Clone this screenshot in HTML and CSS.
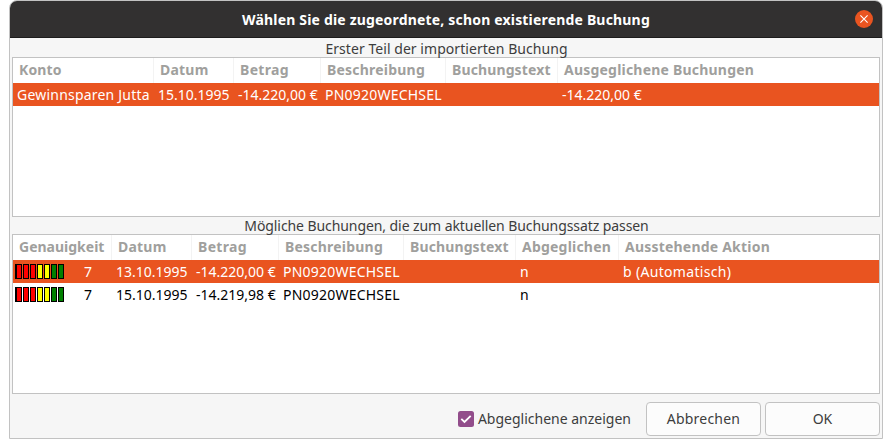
FILE: index.html
```html
<!DOCTYPE html>
<html lang="de">
<head>
<meta charset="utf-8">
<title>Wählen Sie die zugeordnete, schon existierende Buchung</title>
<link rel="stylesheet" href="styles.css">
</head>
<body>
<div class="dialog">
  <header class="titlebar">
    <h1>Wählen Sie die zugeordnete, schon existierende Buchung</h1>
    <button class="close" aria-label="Schließen">
      <svg width="18" height="18" viewBox="0 0 18 18"><circle cx="9" cy="9" r="9" fill="#e95420"/><path d="M5.4 5.4l7.2 7.2M12.6 5.4l-7.2 7.2" stroke="#fff" stroke-width="1.1"/></svg>
    </button>
  </header>
  <main>
    <h2 class="caption first">Erster Teil der importierten Buchung</h2>
    <div class="list">
      <div class="row head source">
        <span class="s1">Konto</span><span class="s2">Datum</span><span class="s3">Betrag</span><span class="s2">Beschreibung</span><span class="s1">Buchungstext</span><span class="s2">Ausgeglichene Buchungen</span>
      </div>
      <div class="row selected source">
        <span class="s2">Gewinnsparen Jutta</span><span>15.10.1995</span><span>-14.220,00 €</span><span class="s2">PN0920WECHSEL</span><span></span><span>-14.220,00 €</span>
      </div>
    </div>
    <h2 class="caption second">Mögliche Buchungen, die zum aktuellen Buchungssatz passen</h2>
    <div class="list">
      <div class="row head match">
        <span>Genauigkeit</span><span class="s2">Datum</span><span class="s3">Betrag</span><span class="s2">Beschreibung</span><span class="s1">Buchungstext</span><span class="s2">Abgeglichen</span><span class="s2">Ausstehende Aktion</span>
      </div>
      <div class="row selected match">
        <span class="score"><i class="meter"><b class="r"></b><b class="r"></b><b class="r"></b><b class="y"></b><b class="y"></b><b class="g"></b><b class="g"></b></i>7</span><span>13.10.1995</span><span>-14.220,00 €</span><span class="s2">PN0920WECHSEL</span><span></span><span>n</span><span class="s3">b (Automatisch)</span>
      </div>
      <div class="row match">
        <span class="score"><i class="meter"><b class="r"></b><b class="r"></b><b class="r"></b><b class="y"></b><b class="y"></b><b class="g"></b><b class="g"></b></i>7</span><span>15.10.1995</span><span>-14.219,98 €</span><span class="s2">PN0920WECHSEL</span><span></span><span>n</span><span></span>
      </div>
    </div>
    <footer>
      <label class="check">
        <svg width="16" height="16" viewBox="0 0 16 16"><rect width="16" height="16" rx="2.5" fill="#924d8b"/><path d="M3.3 7.8l3.2 3.2 6.2-6.2" fill="none" stroke="#fff" stroke-width="1.8"/></svg>
        <span>Abgeglichene anzeigen</span>
      </label>
      <button class="btn s2">Abbrechen</button>
      <button class="btn">OK</button>
    </footer>
  </main>
</div>
</body>
</html>
```
FILE: styles.css
```css
* { box-sizing: border-box; }

body {
  margin: 0;
  background: #fff;
  color: #3d3d3d;
  font: 14px/23px "Noto Sans", sans-serif;
}

.dialog {
  width: 874px;
  height: 439px;
  margin-left: 9px;
  border: 1px solid #c2c2c2;
  border-radius: 8px 8px 0 0;
  background: #f6f6f6;
  overflow: hidden;
}

.titlebar {
  display: grid;
  grid-template-columns: 27px 1fr 27px;
  height: 37px;
  border-bottom: 1px solid #1d1c1c;
  background: #323030;
}

.titlebar h1 {
  grid-column: 2;
  margin: 7px 0 0;
  color: #fff;
  font-size: 14px;
  line-height: 23px;
  font-weight: 700;
  letter-spacing: 0.18px;
  text-align: center;
}

.close {
  width: 18px;
  height: 18px;
  margin-top: 9px;
  padding: 0;
  border: 0;
  background: none;
}

.close svg { display: block; }

main { padding: 0 2px; }

.caption {
  margin: 0;
  padding-left: 1px;
  font-size: 14px;
  font-weight: 400;
  text-align: center;
  white-space: nowrap;
}

.first { height: 19px; line-height: 21px; letter-spacing: 0.05px; }
.second { height: 17px; line-height: 17px; letter-spacing: -0.08px; }

.list {
  height: 160px;
  border: 1px solid #c2c2c2;
  background: #fff;
  color: #000;
}

.row {
  display: grid;
  height: 23px;
  white-space: nowrap;
}

.source { grid-template-columns: 141px 80px 87px 125px 112px 1fr; }
.match { grid-template-columns: 99px 80px 87px 125px 112px 103px 1fr; }

.row > span { padding-left: 4px; }

.head {
  height: 25px;
  color: #a09f9d;
  font-weight: 700;
}

.head > span {
  padding-left: 6px;
  border-right: 1px solid #f3f3f3;
}

.head > span:last-child { border-right: 0; }

.selected { background: #e95420; color: #fff; }

.score { display: flex; }
.row > .score { padding-left: 2px; }

.meter {
  display: flex;
  gap: 1px;
  width: 49px;
  height: 15px;
  margin: 4px 20px 0 0;
  border-left: 1px solid #000;
}

.meter b { width: 6px; border: 1px solid #000; }
.r { background: #f00; }
.y { background: #ff0; }
.g { background: #008000; }

footer {
  display: flex;
  justify-content: flex-end;
  gap: 4px;
  padding-top: 8px;
}

.check {
  display: flex;
  align-items: center;
  gap: 4px;
  height: 34px;
  margin-right: 11px;
}

.check span { padding-bottom: 2px; }

.btn {
  width: 115px;
  height: 34px;
  padding: 0 0 2px;
  border: 1px solid #c2c2c2;
  border-radius: 4px;
  background: #fcfcfc;
  color: #3d3d3d;
  font: inherit;
}

.s1 { letter-spacing: 0.12px; }
.s2 { letter-spacing: 0.21px; }
.s3 { letter-spacing: 0.32px; }
```
